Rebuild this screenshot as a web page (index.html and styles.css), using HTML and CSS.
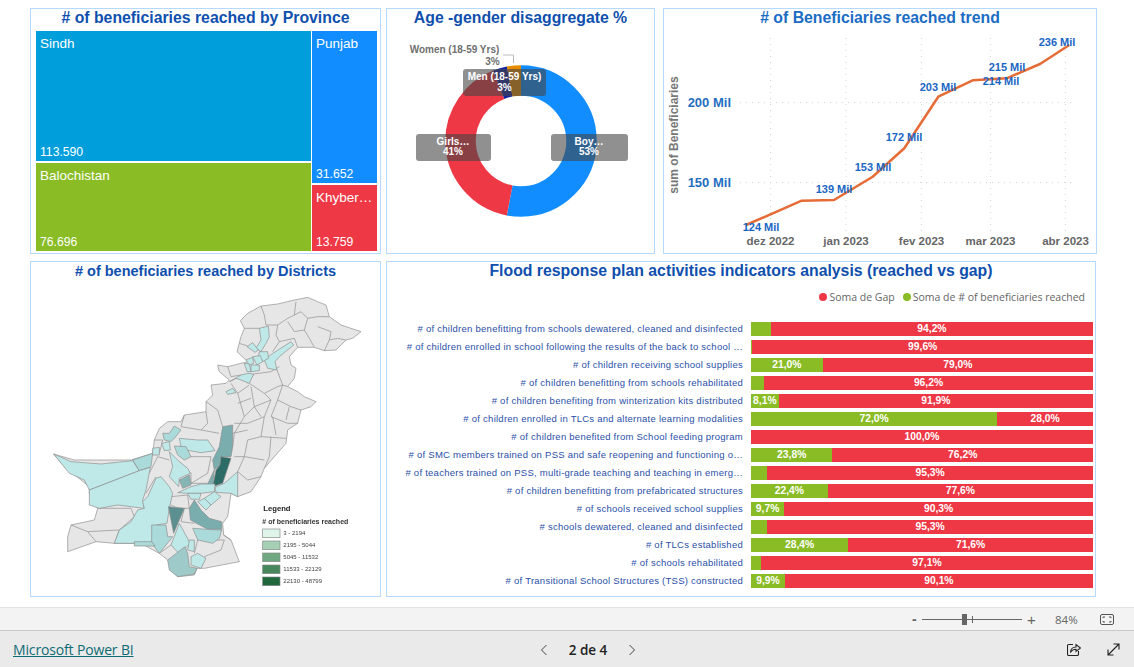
FILE: index.html
```html
<!DOCTYPE html>
<html lang="en">
<head>
<meta charset="utf-8">
<title>Microsoft Power BI</title>
<link rel="stylesheet" href="styles.css">
</head>
<body>
<div class="page">
  <main class="report">
    <div class="row row-top">
      <section class="card card-tree">
        <h2 class="title"># of beneficiaries reached by Province</h2>
        <div class="treemap">
          <div class="tree-col tree-left">
            <div class="tile sindh"><span>Sindh</span><span class="num">113.590</span></div>
            <div class="tile balo"><span>Balochistan</span><span class="num">76.696</span></div>
          </div>
          <div class="tree-col tree-right">
            <div class="tile punjab"><span>Punjab</span><span class="num">31.652</span></div>
            <div class="tile khyber"><span>Khyber…</span><span class="num">13.759</span></div>
          </div>
        </div>
      </section>

      <section class="card card-donut">
        <h2 class="title">Age -gender disaggregate %</h2>
        <svg class="chart donut" viewBox="387 27 267 226" aria-label="Donut chart">
          <g class="ring" transform="rotate(-90 521 141)">
            <circle class="seg s-boys" cx="521" cy="141" r="60.5" pathLength="100" stroke-dasharray="53 47"/>
            <circle class="seg s-girls" cx="521" cy="141" r="60.5" pathLength="100" stroke-dasharray="41 59" stroke-dashoffset="-53"/>
            <circle class="seg s-men" cx="521" cy="141" r="60.5" pathLength="100" stroke-dasharray="3 97" stroke-dashoffset="-94"/>
            <circle class="seg s-women" cx="521" cy="141" r="60.5" pathLength="100" stroke-dasharray="3 97" stroke-dashoffset="-97"/>
          </g>
          <rect class="dl-box" x="463" y="69" width="83" height="27" rx="3"/>
          <rect class="dl-box" x="416" y="134" width="75" height="27" rx="3"/>
          <rect class="dl-box" x="551" y="134" width="77" height="27" rx="3"/>
          <text class="dl" x="504.500" y="80">Men (18-59 Yrs)</text>
          <text class="dl" x="504.500" y="90.500">3%</text>
          <text class="dl" x="453" y="145">Girls…</text>
          <text class="dl" x="453" y="155">41%</text>
          <text class="dl" x="589" y="145">Boy…</text>
          <text class="dl" x="589" y="155">53%</text>
          <text class="ol" x="454.500" y="53">Women (18-59 Yrs)</text>
          <text class="ol" x="492.500" y="65">3%</text>
          <polyline class="leader" points="503,55 513.500,55 513.500,63"/>
        </svg>
      </section>

      <section class="card card-trend">
        <h2 class="title title-light"># of Beneficiaries reached trend</h2>
        <svg class="chart trend" viewBox="664 27 432 226" aria-label="Line chart">
          <g class="grid">
            <line x1="770.500" y1="38" x2="770.500" y2="233"/>
            <line x1="846" y1="38" x2="846" y2="233"/>
            <line x1="921.500" y1="38" x2="921.500" y2="233"/>
            <line x1="990.500" y1="38" x2="990.500" y2="233"/>
            <line x1="1065.500" y1="38" x2="1065.500" y2="233"/>
            <line x1="740" y1="102.500" x2="1076" y2="102.500"/>
            <line x1="740" y1="182.500" x2="1076" y2="182.500"/>
          </g>
          <polyline class="trend-line" points="746,225 801.700,200.700 834,200 872.700,176.700 904.300,148.300 938.300,96.700 972.700,80.300 1006.700,78.300 1040,64 1069.300,45"/>
          <text class="axis-y" x="731" y="107">200 Mil</text>
          <text class="axis-y" x="731" y="187">150 Mil</text>
          <text class="axis-title" transform="translate(678 135) rotate(-90)">sum of Beneficiaries</text>
          <text class="axis-x" x="770.500" y="245">dez 2022</text>
          <text class="axis-x" x="846" y="245">jan 2023</text>
          <text class="axis-x" x="921.500" y="245">fev 2023</text>
          <text class="axis-x" x="990.500" y="245">mar 2023</text>
          <text class="axis-x" x="1065.500" y="245">abr 2023</text>
          <text class="pt" x="761" y="231">124 Mil</text>
          <text class="pt" x="834" y="193">139 Mil</text>
          <text class="pt" x="873" y="171">153 Mil</text>
          <text class="pt" x="904" y="141">172 Mil</text>
          <text class="pt" x="938" y="91">203 Mil</text>
          <text class="pt" x="1001" y="85">214 Mil</text>
          <text class="pt" x="1007" y="71">215 Mil</text>
          <text class="pt" x="1057" y="46">236 Mil</text>
        </svg>
      </section>
    </div>

    <div class="row row-bottom">
      <section class="card card-map">
        <h2 class="title title-small"># of beneficiaries reached by Districts</h2>
        <svg class="chart map" viewBox="0 60 1047 954" aria-label="Map of Pakistan districts">
          <g class="map-shapes">
            <polygon class="d-base" points="628,182 650,160 690,138 740,132 790,120 830,112 860,125 885,135 895,170 930,195 960,205 990,215 965,235 945,240 915,270 880,272 850,262 800,262 775,290 780,315 795,325 790,355 770,380 800,395 820,410 855,425 840,440 810,450 800,490 770,510 765,550 730,590 700,625 690,650 660,695 620,710 600,700 590,770 575,790 578,825 600,840 625,905 520,925 498,925 490,945 440,950 410,900 385,880 330,850 250,850 195,845 110,875 110,830 120,795 190,780 200,745 175,700 175,680 100,620 68,582 130,600 300,600 365,580 370,540 385,505 410,485 450,485 460,465 525,455 525,425 545,405 540,375 585,370 595,360 565,335 560,315 590,320 650,305 618,275 630,230 640,205"/>
            <g class="d-lines">
              <polyline points="690,138 700,165 705,195 740,195 770,175 790,165 795,125"/>
              <polyline points="790,165 810,155 830,175 860,170 895,170"/>
              <polyline points="740,195 735,225 745,245 725,275"/>
              <polyline points="830,175 820,210 835,235 850,262"/>
              <polyline points="770,185 790,215 820,210"/>
              <polyline points="745,245 790,235 800,262"/>
              <polyline points="860,200 900,215 895,240 920,235 945,240"/>
              <polyline points="880,272 895,240"/>
              <polyline points="640,205 685,205"/>
              <polyline points="625,250 650,258"/>
              <polyline points="590,320 600,350 630,345"/>
              <polyline points="650,370 668,342 720,335 745,320"/>
              <polyline points="738,330 755,375 770,380"/>
              <polyline points="655,370 700,400 740,380 755,375"/>
              <polyline points="600,370 620,400 655,375"/>
              <polyline points="620,400 640,470 610,520 605,560"/>
              <polyline points="525,425 560,450 575,500"/>
              <polyline points="660,380 670,440 640,470"/>
              <polyline points="670,440 720,420 700,400"/>
              <polyline points="720,420 700,470 650,490 610,490"/>
              <polyline points="755,375 740,420 780,440 810,450"/>
              <polyline points="740,420 720,470 770,490 800,490"/>
              <polyline points="700,470 690,530 650,540"/>
              <polyline points="690,530 765,535"/>
              <polyline points="650,540 640,590 620,635 650,660 690,650"/>
              <polyline points="720,530 715,590 700,625"/>
              <polyline points="640,590 700,600"/>
              <polyline points="610,590 640,590"/>
              <polyline points="605,520 650,510"/>
              <polyline points="670,440 690,470"/>
              <polyline points="775,440 765,480"/>
              <polyline points="725,470 735,525"/>
              <polyline points="620,430 660,415"/>
              <polyline points="460,465 450,500 510,510 530,490 525,455"/>
              <polyline points="510,510 565,520"/>
              <polyline points="370,540 395,540 385,580"/>
              <polyline points="355,640 380,590 415,600"/>
              <polyline points="345,700 375,650"/>
              <polyline points="480,590 540,590 530,640 480,670 480,640 465,625"/>
              <polyline points="480,670 530,670"/>
              <polyline points="200,745 300,745 310,770 265,810 170,815 120,795"/>
              <polyline points="250,850 265,810"/>
              <polyline points="170,815 195,845"/>
              <polyline points="420,710 470,705 475,745 440,745 420,735"/>
              <polyline points="460,745 450,785 490,790"/>
              <polyline points="500,840 490,880"/>
              <polyline points="530,840 580,840 570,870 520,890"/>
              <polyline points="578,825 600,840"/>
              <polyline points="385,880 420,855"/>
            </g>
            <polygon class="d-l" points="68,582 120,605 210,612 305,602 325,632 175,690 160,660 115,640"/>
            <polygon class="d-m" points="305,600 365,580 360,620 325,632"/>
            <polygon class="d-l" points="175,690 325,632 358,622 345,690 335,720 340,745 260,735 205,745 175,735"/>
            <polygon class="d-l" points="340,745 335,725 350,710 375,655 390,650 415,680 425,700 415,745 408,790 375,795 362,850 250,850 265,810 300,785 320,750"/>
            <polygon class="d-m" points="362,795 405,795 410,830 425,830 385,880 362,850"/>
            <polygon class="d-m" points="310,845 362,845 372,858 310,858"/>
            <polygon class="d-l" points="420,855 445,790 478,850 445,882"/>
            <polygon class="d-m2" points="410,900 462,860 470,880 475,920 498,925 490,942 440,950 415,930"/>
            <polygon class="d-d" points="412,740 460,745 428,820"/>
            <polygon class="d-t" points="475,745 490,720 510,750 535,775 572,785 572,808 530,808 478,780"/>
            <polygon class="d-m" points="485,805 530,808 572,810 565,835 545,850 500,840"/>
            <polygon class="d-l" points="480,890 500,880 525,895 510,925 480,915"/>
            <polygon class="d-l" points="470,870 475,840 490,840 490,875"/>
            <polygon class="d-t" points="575,500 605,495 605,560 600,590 570,590 567,615 550,630 545,600 565,560"/>
            <polygon class="d-t" points="550,630 545,680 530,672"/>
            <polygon class="d-x" points="570,590 600,595 585,640 575,670 545,680 555,630 567,615"/>
            <polygon class="d-l" points="620,635 620,710 600,700 555,697 552,682 580,670"/>
            <polygon class="d-l" points="520,715 550,695 570,710 540,735"/>
            <polygon class="d-l" points="500,725 520,715 540,735 525,750"/>
            <polygon class="d-l" points="440,698 480,680 510,672 552,672 550,695 510,700 470,700"/>
            <polygon class="d-l" points="470,700 510,700 505,718 480,718"/>
            <polygon class="d-m" points="395,520 415,520 430,498 450,510 430,535 420,545 400,540"/>
            <polygon class="d-l" points="445,535 500,540 530,540 552,572 510,578 465,570 450,560"/>
            <polygon class="d-m" points="430,558 465,560 480,590 460,600 440,585"/>
            <polygon class="d-l" points="415,575 430,590 445,605 470,625 478,640 445,655 443,680 415,650 425,620"/>
            <polygon class="d-t2" points="445,660 475,645 480,675 455,685"/>
            <polygon class="d-l" points="365,565 385,562 385,585 365,585"/>
            <polygon class="d-l" points="392,550 415,545 418,570 400,572"/>
            <polygon class="d-l" points="685,205 712,198 715,230 705,250 690,275 675,265 690,240"/>
            <polygon class="d-l" points="648,260 665,248 682,270 672,277"/>
            <polygon class="d-l" points="718,285 780,245 788,255 745,290 732,305 738,330 710,325 700,300"/>
            <polygon class="d-l" points="685,275 710,275 712,295 695,305 682,290"/>
            <polygon class="d-l" points="645,300 665,292 668,310 655,315"/>
            <polygon class="d-l" points="665,290 688,287 695,305 678,315"/>
            <polygon class="d-l" points="640,310 655,312 660,335 648,335"/>
            <polygon class="d-l" points="660,315 685,315 685,332 660,335"/>
            <polygon class="d-l" points="596,365 630,345 650,340 668,342 655,370 630,360 615,355"/>
            <polygon class="d-l" points="585,395 605,385 615,398 590,403"/>
          </g>
          <text class="lg-title" x="697" y="754">Legend</text>
          <text class="lg-sub" x="694" y="793"># of beneficiaries reached</text>
          <rect class="sw sw1" x="695" y="807" width="52" height="26"/>
          <rect class="sw sw2" x="695" y="843" width="52" height="26"/>
          <rect class="sw sw3" x="695" y="879" width="52" height="26"/>
          <rect class="sw sw4" x="695" y="915" width="52" height="26"/>
          <rect class="sw sw5" x="695" y="951" width="52" height="26"/>
          <text class="lg-t" x="757" y="826">3 - 2194</text>
          <text class="lg-t" x="757" y="862">2195 - 5044</text>
          <text class="lg-t" x="757" y="898">5045 - 11532</text>
          <text class="lg-t" x="757" y="934">11533 - 22129</text>
          <text class="lg-t" x="757" y="970">22130 - 48799</text>
        </svg>
      </section>

      <section class="card card-bars">
        <h2 class="title">Flood response plan activities indicators analysis (reached vs gap)</h2>
        <div class="legend">
          <span class="lg-item"><i class="dot dot-red"></i>Soma de Gap</span>
          <span class="lg-item"><i class="dot dot-green"></i>Soma de # of beneficiaries reached</span>
        </div>
        <div class="bars">
          <div class="lbl"># of children benefitting from schools dewatered, cleaned and disinfected</div>
          <div class="bar"><div class="g" style="width:5.8%"></div><div class="r">94,2%</div></div>
          <div class="lbl"># of children enrolled in school following the results of the back to school …</div>
          <div class="bar"><div class="g" style="width:.4%"></div><div class="r">99,6%</div></div>
          <div class="lbl"># of children receiving school supplies</div>
          <div class="bar"><div class="g" style="width:21%">21,0%</div><div class="r">79,0%</div></div>
          <div class="lbl"># of children benefitting from schools rehabilitated</div>
          <div class="bar"><div class="g" style="width:3.8%"></div><div class="r">96,2%</div></div>
          <div class="lbl"># of children benefiting from winterization kits distributed</div>
          <div class="bar"><div class="g" style="width:8.1%">8,1%</div><div class="r">91,9%</div></div>
          <div class="lbl"># of children enrolled in TLCs and alternate learning modalities</div>
          <div class="bar"><div class="g" style="width:72%">72,0%</div><div class="r">28,0%</div></div>
          <div class="lbl"># of children benefited from School feeding program</div>
          <div class="bar"><div class="r">100,0%</div></div>
          <div class="lbl"># of SMC members trained on PSS and safe reopening and functioning o…</div>
          <div class="bar"><div class="g" style="width:23.8%">23,8%</div><div class="r">76,2%</div></div>
          <div class="lbl"># of teachers trained on PSS, multi-grade teaching and teaching in emerg…</div>
          <div class="bar"><div class="g" style="width:4.7%"></div><div class="r">95,3%</div></div>
          <div class="lbl"># of children benefitting from prefabricated structures</div>
          <div class="bar"><div class="g" style="width:22.4%">22,4%</div><div class="r">77,6%</div></div>
          <div class="lbl"># of schools received school supplies</div>
          <div class="bar"><div class="g" style="width:9.7%">9,7%</div><div class="r">90,3%</div></div>
          <div class="lbl"># schools dewatered, cleaned and disinfected</div>
          <div class="bar"><div class="g" style="width:4.7%"></div><div class="r">95,3%</div></div>
          <div class="lbl"># of TLCs established</div>
          <div class="bar"><div class="g" style="width:28.4%">28,4%</div><div class="r">71,6%</div></div>
          <div class="lbl"># of schools rehabilitated</div>
          <div class="bar"><div class="g" style="width:2.9%"></div><div class="r">97,1%</div></div>
          <div class="lbl"># of Transitional School Structures (TSS) constructed</div>
          <div class="bar"><div class="g" style="width:9.9%">9,9%</div><div class="r">90,1%</div></div>
        </div>
      </section>
    </div>
  </main>

  <div class="zoombar">
    <span class="z-minus">-</span>
    <div class="z-track"><i class="z-tick"></i><i class="z-thumb"></i></div>
    <span class="z-plus">+</span>
    <span class="z-pct">84%</span>
    <svg class="z-fit" viewBox="0 0 14 11" aria-hidden="true">
      <rect x=".5" y=".5" width="13" height="10" rx="1.500"/>
      <path d="M3 4V3h2M9 3h2v1M3 7v1h2M9 8h2V7"/>
    </svg>
  </div>

  <footer class="footer">
    <a class="brand" href="#">Microsoft Power BI</a>
    <div class="pager">
      <svg class="chev" viewBox="0 0 8 12" aria-hidden="true"><path d="M6.500 1 1.500 6l5 5"/></svg>
      <span class="page-no">2 de 4</span>
      <svg class="chev" viewBox="0 0 8 12" aria-hidden="true"><path d="M1.500 1l5 5-5 5"/></svg>
    </div>
    <div class="tools">
      <svg class="tool tool-share" viewBox="0 0 14 13" aria-hidden="true">
        <path d="M6 1.500H1.800A1.300 1.300 0 0 0 .5 2.800v8.400a1.300 1.300 0 0 0 1.300 1.300h8.400a1.300 1.300 0 0 0 1.300-1.300V8"/>
        <path d="M3.500 9.500c0-3.500 2.500-5.500 5.500-5.500V1.500L13.500 5 9 8.500V6.300c-2.500 0-4.300.8-5.500 3.200z"/>
      </svg>
      <svg class="tool tool-expand" viewBox="0 0 13 13" aria-hidden="true">
        <path d="M1 12 12 1M6.500 1H12v5.500M1 6.500V12h5.500"/>
      </svg>
    </div>
  </footer>
</div>
</body>
</html>
```

FILE: styles.css
```css
* { box-sizing: border-box; }
html, body { margin: 0; padding: 0; background: #fff; }
body { font-family: "Liberation Sans", Arial, sans-serif; }
.page { width: 1134px; height: 667px; display: flex; flex-direction: column; overflow: hidden; }

.report { flex: 1; padding: 8px 0 0 30px; display: flex; flex-direction: column; gap: 7px; }
.row { display: flex; }
.row-top { height: 246px; }
.row-bottom { height: 336px; gap: 5px; }

.card { border: 1px solid #b5d9ff; background: #fff; display: flex; flex-direction: column; overflow: hidden; }
.card-tree { width: 351px; margin-right: 5px; }
.card-donut { width: 269px; margin-right: 8px; }
.card-trend { width: 434px; }
.card-map { width: 351px; }
.card-bars { width: 710px; }

.title { margin: 0; height: 18px; line-height: 18px; flex: none; text-align: center; font-size: 15.800px; font-weight: 700; color: #0f4fae; white-space: nowrap; }
.title-light { color: #1a6cc4; }
.title-small { font-size: 14.500px; }

.chart { display: block; flex: none; }
.donut { width: 267px; height: 226px; }
.trend { width: 432px; height: 226px; }
.map { width: 349px; height: 318px; }

/* treemap */
.treemap { display: flex; gap: 1px; margin: 4px 2px 2px 5px; height: 220px; }
.tree-col { display: flex; flex-direction: column; gap: 2px; }
.tree-left { width: 275px; }
.tree-right { width: 65px; }
.tile { display: flex; flex-direction: column; justify-content: space-between; padding: 5px 4px 1px 4px; color: #fff; font-size: 13.500px; line-height: 15px; white-space: nowrap; }
.tile .num { font-size: 12.200px; }
.sindh { background: #009fdb; height: 130px; }
.balo { background: #89bc25; height: 88px; }
.punjab { background: #118dff; height: 152px; }
.khyber { background: #ee3845; height: 66px; }

/* donut */
.seg { fill: none; stroke-width: 30.5; }
.s-boys { stroke: #118dff; }
.s-girls { stroke: #ee3845; }
.s-men { stroke: #12239e; }
.s-women { stroke: #e68a00; }
.dl-box { fill: rgba(70, 70, 70, .6); }
.dl { fill: #fff; font-size: 10px; font-weight: 700; text-anchor: middle; }
.ol { fill: #707070; font-size: 10px; font-weight: 700; text-anchor: middle; }
.leader { fill: none; stroke: #bbb; stroke-width: 1; }

/* trend */
.grid line { stroke: #d5d5d5; stroke-width: 1; stroke-dasharray: 1 5; }
.trend-line { fill: none; stroke: #e66c37; stroke-width: 2.500; stroke-linejoin: round; }
.axis-y { fill: #1f6fc0; font-size: 13px; font-weight: 700; text-anchor: end; }
.axis-x { fill: #666; font-size: 11.500px; font-weight: 700; text-anchor: middle; }
.axis-title { fill: #777; font-size: 12px; font-weight: 700; text-anchor: middle; }
.pt { fill: #1a66c4; font-size: 11px; font-weight: 700; text-anchor: middle; }

/* map */
.map { filter: blur(.35px); }
.map-shapes polygon { stroke: #8c8c8c; stroke-width: 2; stroke-linejoin: round; }
.d-base { fill: #e6e6e6; }
.d-lines polyline { fill: none; stroke: #8c8c8c; stroke-width: 2; }
.d-l { fill: #bfe8e8; }
.d-m { fill: #abdada; }
.d-m2 { fill: #9fcaca; }
.d-t { fill: #7aadad; }
.d-t2 { fill: #85b5b5; }
.d-d { fill: #5c9090; }
.d-x { fill: #2d6b66; }
.lg-title { font-size: 23px; font-weight: 700; fill: #222; }
.lg-sub { font-size: 21px; font-weight: 700; fill: #333; }
.lg-t { font-size: 18px; fill: #444; }
.sw { stroke: #888; stroke-width: 2; }
.sw1 { fill: #dff5ea; }
.sw2 { fill: #a6d0b4; }
.sw3 { fill: #70a882; }
.sw4 { fill: #47875b; }
.sw5 { fill: #20683c; }

/* bars */
.legend { display: flex; justify-content: flex-end; gap: 8px; height: 14px; margin: 10px 10px 0 0; font-family: "Open Sans", sans-serif; font-size: 10.500px; line-height: 14px; color: #666; }
.lg-item { display: flex; align-items: center; gap: 2px; white-space: nowrap; }
.dot { width: 8px; height: 8px; border-radius: 50%; }
.dot-red { background: #ee3845; }
.dot-green { background: #89bc25; }
.bars { display: grid; grid-template-columns: 356px 342px; column-gap: 8px; row-gap: 4px; margin-top: 18px; }
.lbl { height: 14px; line-height: 14px; font-size: 9.500px; letter-spacing: .255px; color: #2a4fa8; text-align: right; white-space: nowrap; }
.bar { display: flex; height: 14px; color: #fff; font-size: 10.300px; font-weight: 700; line-height: 14px; text-align: center; }
.g { background: #89bc25; flex: none; overflow: hidden; white-space: nowrap; }
.r { background: #ee3845; flex: 1; }

/* footer */
.zoombar { flex: none; height: 24px; margin-top: 10px; background: #f3f3f3; border-top: 1px solid #e3e3e3; border-bottom: 1px solid #c9c9c9; display: flex; align-items: center; padding-left: 912px; color: #666; }
.z-minus { width: 10px; font-size: 14px; font-weight: 700; line-height: 14px; }
.z-track { position: relative; width: 100px; height: 1px; background: #666; }
.z-tick { position: absolute; left: 50px; top: -3px; width: 1px; height: 7px; background: #666; }
.z-thumb { position: absolute; left: 40px; top: -5px; width: 5px; height: 11px; background: #666; }
.z-plus { margin-left: 5px; width: 12px; font-size: 15px; line-height: 15px; }
.z-pct { margin-left: 16px; font-family: "Open Sans", sans-serif; font-size: 11.500px; }
.z-fit { margin-left: 22px; width: 14px; height: 11px; fill: none; stroke: #555; stroke-width: 1; }

.footer { flex: none; height: 37px; background: #eaeaea; display: grid; grid-template-columns: 527px 96px 1fr; align-items: center; padding-left: 13px; }
.brand { font-family: "Open Sans", sans-serif; font-size: 14px; letter-spacing: -.15px; color: #0f6a75; text-decoration: underline; white-space: nowrap; }
.pager { display: flex; align-items: center; justify-content: space-between; }
.page-no { font-family: "Open Sans", sans-serif; font-size: 13.500px; font-weight: 600; color: #222; }
.chev { width: 8px; height: 12px; fill: none; stroke: #444; stroke-width: 1; }
.tools { display: flex; justify-content: flex-end; gap: 26px; padding-right: 14px; }
.tool { height: 13px; fill: none; stroke: #222; stroke-width: 1.100; }
.tool-share { width: 14px; }
.tool-expand { width: 13px; }
```
